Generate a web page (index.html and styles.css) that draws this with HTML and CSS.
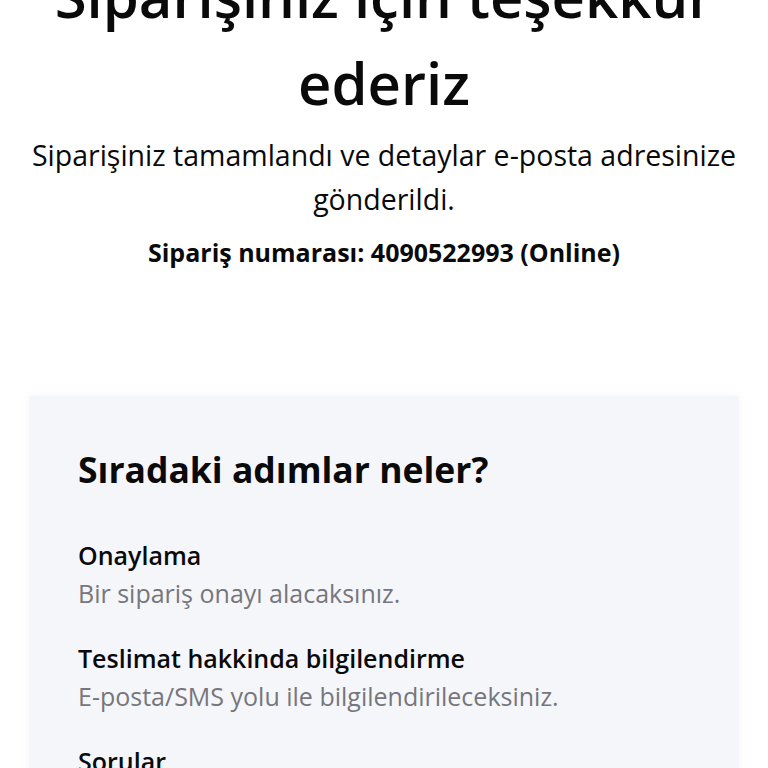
FILE: index.html
```html
<!DOCTYPE html>
<html lang="tr">
<head>
<meta charset="utf-8">
<link rel="stylesheet" href="styles.css">
</head>
<body>
<main class="page">
  <section class="thanks">
    <h1 class="thanks-title">Siparişiniz için teşekkür ederiz</h1>
    <p class="thanks-text">Siparişiniz tamamlandı ve detaylar e-posta adresinize gönderildi.</p>
    <p class="order-no">Sipariş numarası: 4090522993 (Online)</p>
  </section>
  <section class="next-card">
    <h2 class="next-title">Sıradaki adımlar neler?</h2>
    <div class="step">
      <h3 class="step-title">Onaylama</h3>
      <p class="step-text">Bir sipariş onayı alacaksınız.</p>
    </div>
    <div class="step">
      <h3 class="step-title">Teslimat hakkinda bilgilendirme</h3>
      <p class="step-text">E-posta/SMS yolu ile bilgilendirileceksiniz.</p>
    </div>
    <div class="step">
      <h3 class="step-title">Sorular</h3>
      <p class="step-text">Müşteri hizmetlerimiz size yardımcı olmaktan memnuniyet duyar.</p>
    </div>
  </section>
</main>
</body>
</html>
```

FILE: styles.css
```css
html, body {
  margin: 0;
  padding: 0;
  background: #ffffff;
}
body {
  font-family: "Open Sans", "Noto Sans", sans-serif;
  color: #0a0a0a;
}
.page {
  margin-top: -48px;
  padding: 0 29px;
}
.thanks {
  text-align: center;
  padding: 0 0 126px;
}
.thanks-title {
  margin: 0;
  font-size: 58px;
  font-weight: 600;
  line-height: 87px;
  padding: 0 20px;
}
.thanks-text {
  margin: 7px 0 0;
  font-size: 28.5px;
  line-height: 44px;
  font-weight: 400;
}
.order-no {
  margin: 13px 0 0;
  font-size: 25px;
  font-weight: 700;
  line-height: 36px;
}
.next-card {
  background: #f5f6fa;
  box-shadow: 0 0 8px rgba(0, 0, 0, 0.05);
  padding: 48px 49px 40px;
}
.next-title {
  margin: 0 0 42px;
  font-size: 35.5px;
  font-weight: 700;
  line-height: 50px;
}
.step {
  margin-bottom: 27px;
}
.step-title {
  margin: 0;
  font-size: 25px;
  font-weight: 600;
  line-height: 38px;
}
.step-text {
  margin: 0;
  font-size: 25px;
  font-weight: 400;
  line-height: 38px;
  color: #76767c;
}
```
